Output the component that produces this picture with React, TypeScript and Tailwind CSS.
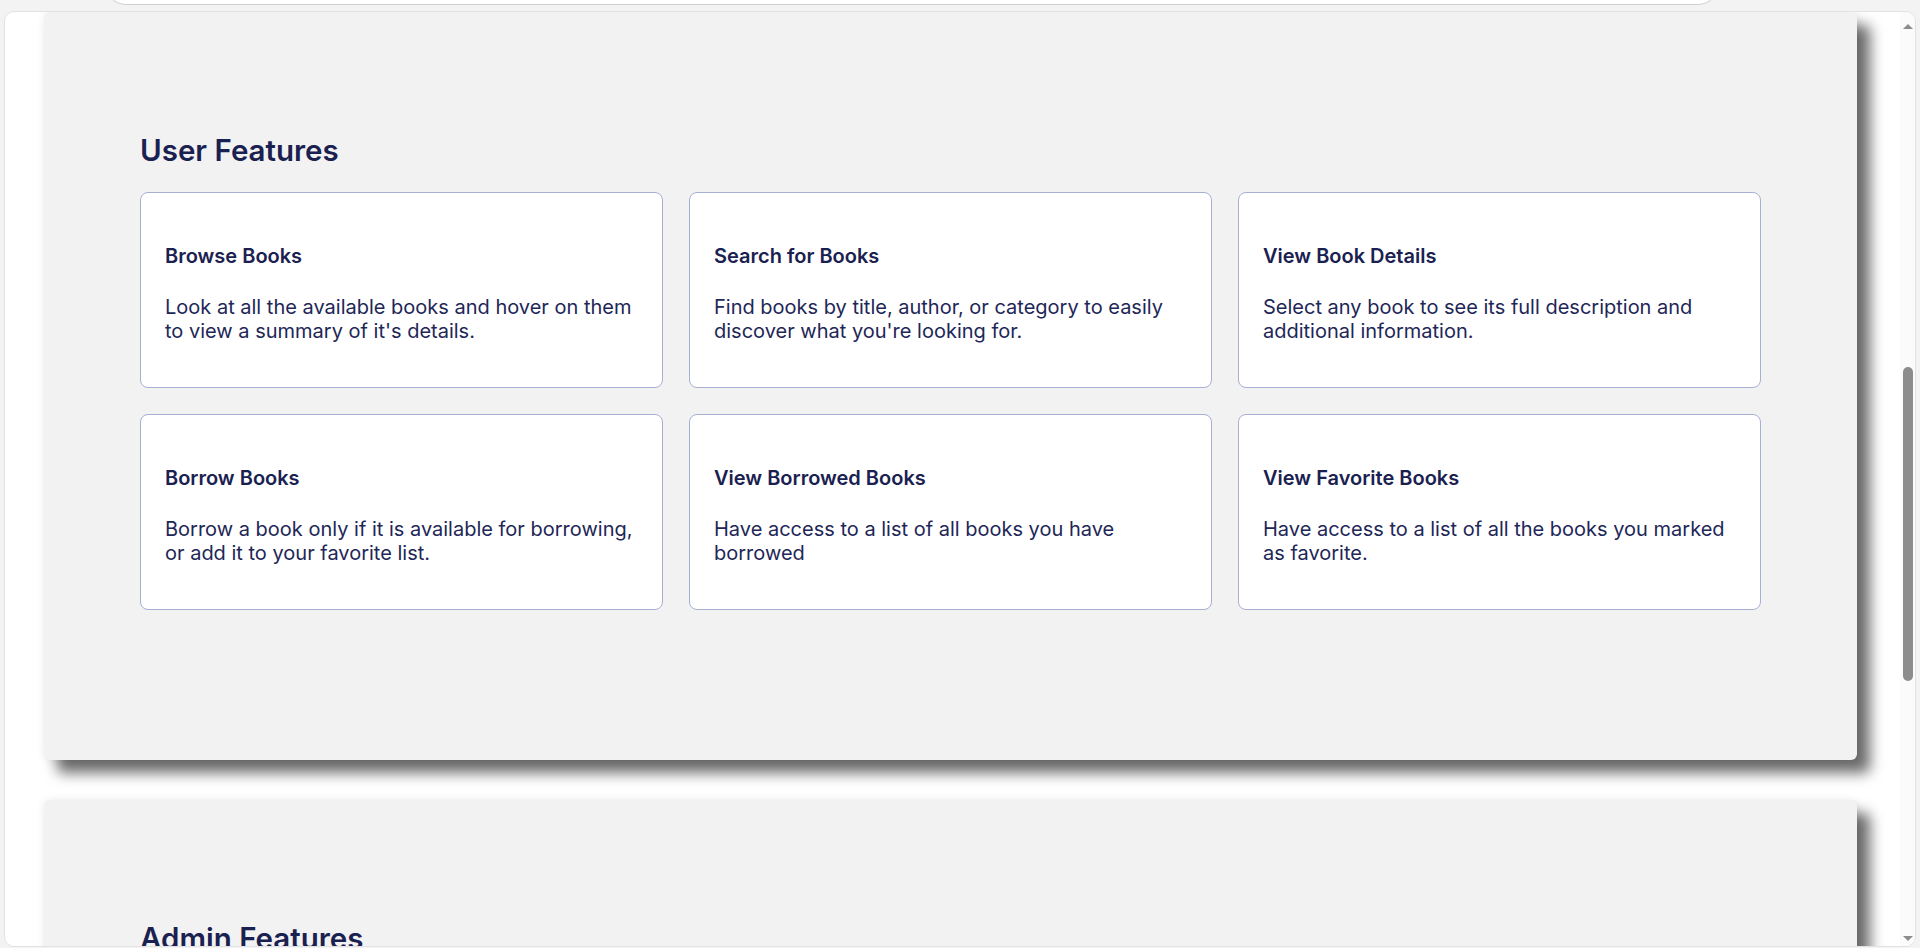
const userFeatures = [
  { title: 'Browse Books', text: "Look at all the available books and hover on them to view a summary of it's details." },
  { title: 'Search for Books', text: "Find books by title, author, or category to easily discover what you're looking for." },
  { title: 'View Book Details', text: 'Select any book to see its full description and additional information.' },
  { title: 'Borrow Books', text: 'Borrow a book only if it is available for borrowing, or add it to your favorite list.' },
  { title: 'View Borrowed Books', text: 'Have access to a list of all books you have borrowed' },
  { title: 'View Favorite Books', text: 'Have access to a list of all the books you marked as favorite.' },
];

const FeatureCard = ({ title, text }: { title: string; text: string }) => (
  <div className="h-[196px] bg-white border border-[#a8afd5] rounded-[8px] pt-[51px] pl-[24px] pr-[20px]">
    <h3 className="text-[20px] leading-[24px] font-semibold text-[#1a2150]">{title}</h3>
    <p className="mt-[27px] text-[20px] leading-[24px] text-[#1e2757]">{text}</p>
  </div>
);

const Section = ({ heading, items }: { heading: string; items: typeof userFeatures }) => (
  <section className="bg-[#f2f2f2] rounded-[6px] pt-[120px] pb-[150px] px-[96px] shadow-[13px_13px_14px_rgba(0,0,0,0.58),0_0_8px_rgba(0,0,0,0.08)]">
    <h2 className="text-[29.5px] leading-[36px] font-semibold text-[#1a2150] mb-[24px]">{heading}</h2>
    <div className="grid grid-cols-3 gap-[26px]">
      {items.map((f) => (
        <FeatureCard key={f.title} title={f.title} text={f.text} />
      ))}
    </div>
  </section>
);

export default function App() {
  return (
    <div className="h-[948px] overflow-hidden bg-[#f3f3f3] font-['Inter','Liberation_Sans',sans-serif]">
      {/* search bar, mostly scrolled out of view */}
      <div className="ml-[104px] w-[1616px] h-[45px] mt-[-40px] rounded-full border border-[#cfcfcf] bg-white" />

      <div className="ml-[4px] mt-[6px] w-[1912px] h-[936px] rounded-[10px] border border-[#e2e2e2] bg-white flex overflow-hidden">
        <div className="flex-1 pl-[39px] pr-[43px] overflow-hidden">
          <div className="flex flex-col gap-[40px]">
            <Section heading="User Features" items={userFeatures} />
            <Section heading="Admin Features" items={[]} />
          </div>
        </div>

        {/* scrollbar */}
        <div className="w-[15px] bg-[#fbfbfb] flex flex-col items-center">
          <div className="mt-[12px] w-0 h-0 border-l-[5px] border-r-[5px] border-b-[5px] border-l-transparent border-r-transparent border-b-[#8c8c8c]" />
          <div className="mt-[338px] w-[10px] h-[314px] rounded-full bg-[#8c8c8c]" />
          <div className="mt-auto mb-[5px] w-0 h-0 border-l-[5px] border-r-[5px] border-t-[5px] border-l-transparent border-r-transparent border-t-[#8c8c8c]" />
        </div>
      </div>
    </div>
  );
}
